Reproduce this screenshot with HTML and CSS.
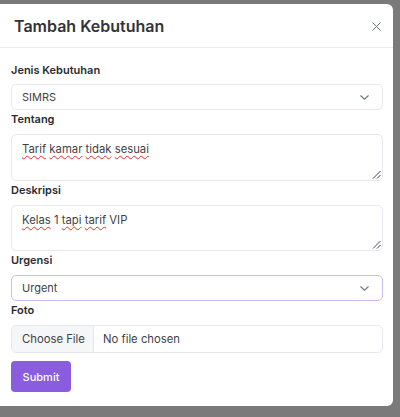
FILE: index.html
```html
<!DOCTYPE html>
<html lang="id">
<head>
<meta charset="utf-8">
<title>Tambah Kebutuhan</title>
<link rel="stylesheet" href="styles.css">
</head>
<body>
<div class="modal">
  <div class="modal-header">
    <h2 class="modal-title">Tambah Kebutuhan</h2>
    <svg class="close" width="9" height="9" viewBox="0 0 9 9"><path d="M0.5 0.5L8.5 8.5M8.5 0.5L0.5 8.5" stroke="#6b7280" stroke-width="1" fill="none"/></svg>
  </div>
  <div class="modal-body">
    <div class="label first">Jenis Kebutuhan</div>
    <div class="select">
      <span>SIMRS</span>
      <svg width="9" height="5" viewBox="0 0 9 5"><path d="M0.5 0.5L4.5 4.2L8.5 0.5" stroke="#6b7280" stroke-width="1.1" fill="none"/></svg>
    </div>
    <div class="label">Tentang</div>
    <div class="textarea">
      <span class="sp">Tarif</span> <span class="sp">kamar</span> <span class="sp">tidak</span> <span class="sp">sesuai</span>
      <svg class="grip" width="9" height="9" viewBox="0 0 9 9"><path d="M8.5 1L1 8.5M8.5 5L5 8.5" stroke="#444" stroke-width="1" fill="none"/></svg>
    </div>
    <div class="label">Deskripsi</div>
    <div class="textarea short">
      <span class="sp">Kelas</span> 1 <span class="sp">tapi</span> <span class="sp">tarif</span> VIP
      <svg class="grip" width="9" height="9" viewBox="0 0 9 9"><path d="M8.5 1L1 8.5M8.5 5L5 8.5" stroke="#444" stroke-width="1" fill="none"/></svg>
    </div>
    <div class="label">Urgensi</div>
    <div class="select focus">
      <span>Urgent</span>
      <svg width="9" height="5" viewBox="0 0 9 5"><path d="M0.5 0.5L4.5 4.2L8.5 0.5" stroke="#6b7280" stroke-width="1.1" fill="none"/></svg>
    </div>
    <div class="label">Foto</div>
    <div class="file">
      <div class="file-btn">Choose File</div>
      <div class="file-name">No file chosen</div>
    </div>
    <button class="submit">Submit</button>
  </div>
</div>
</body>
</html>
```
FILE: styles.css
```css
html, body {
  margin: 0;
  padding: 0;
}
body {
  background: #7a7a7a;
  font-family: Inter, "Noto Sans", sans-serif;
  height: 417px;
  overflow: hidden;
  padding-top: 4px;
  box-sizing: border-box;
}
.modal {
  width: 393px;
  height: 402px;
  background: #fff;
  border-radius: 0 6px 6px 0;
  box-sizing: border-box;
}
.modal-header {
  height: 44px;
  border-bottom: 1px solid #e9eaee;
  box-sizing: border-box;
  display: flex;
  align-items: center;
  justify-content: space-between;
  padding: 0 12px 0 14px;
}
.modal-title {
  margin: 0;
  font-size: 16px;
  font-weight: 600;
  color: #333338;
}
.close {
  display: block;
  margin-top: 2px;
}
.modal-body {
  padding: 13px 10px 0 11px;
  display: flex;
  flex-direction: column;
}
.label {
  font-size: 11px;
  font-weight: 600;
  line-height: 18px;
  color: #2b2b30;
  margin-bottom: 6px;
}
.label.first {
  margin-bottom: 5px;
}
.select {
  height: 26px;
  border: 1px solid #e6e7f0;
  border-radius: 5px;
  box-sizing: border-box;
  display: flex;
  align-items: center;
  justify-content: space-between;
  padding: 0 13px 0 10px;
  font-size: 11px;
  color: #3f3f46;
}
.select.focus {
  border-color: #cbbcf2;
}
.textarea {
  position: relative;
  height: 47px;
  border: 1px solid #e6e7f0;
  border-radius: 5px;
  box-sizing: border-box;
  padding: 5px 10px;
  font-size: 11.3px;
  line-height: 18px;
  color: #3f3f46;
}
.textarea.short {
  height: 46px;
}
.sp {
  text-decoration: underline wavy #e0302a;
  text-decoration-thickness: 1px;
  text-underline-offset: 2px;
}
.grip {
  position: absolute;
  right: 1px;
  bottom: 1px;
}
.file {
  height: 28px;
  border: 1px solid #e6e7f0;
  border-radius: 5px;
  box-sizing: border-box;
  display: flex;
  overflow: hidden;
  font-size: 11.3px;
  color: #3f3f46;
  margin-bottom: 8px;
}
.file-btn {
  width: 82px;
  background: #f5f6f8;
  border-right: 1px solid #e6e7f0;
  display: flex;
  align-items: center;
  padding-left: 10px;
  box-sizing: border-box;
}
.file-name {
  display: flex;
  align-items: center;
  padding-left: 9px;
}
.submit {
  align-self: flex-start;
  width: 60px;
  height: 31px;
  border: none;
  border-radius: 4px;
  background: #8a5cdf;
  color: #fff;
  font-family: Inter, "Noto Sans", sans-serif;
  font-size: 11px;
  font-weight: 500;
  padding: 0;
}
```
